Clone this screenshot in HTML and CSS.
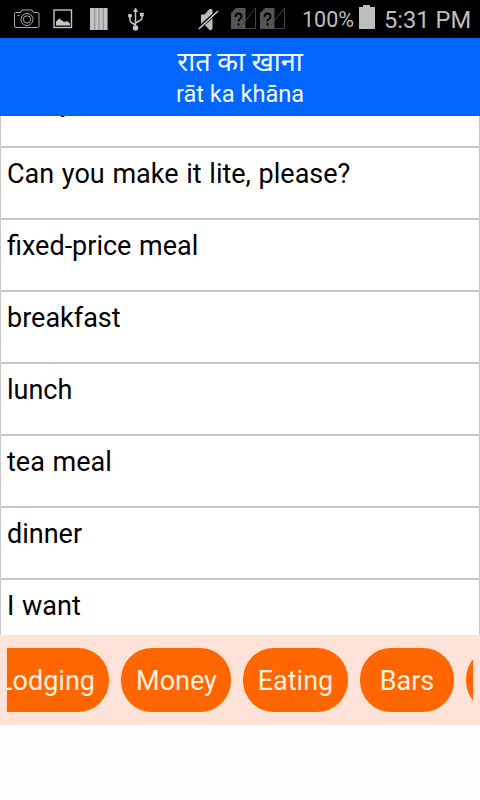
FILE: index.html
```html
<!DOCTYPE html>
<html lang="en">
<head>
<meta charset="utf-8">
<title>Phrasebook</title>
<link rel="stylesheet" href="styles.css">
</head>
<body>
<div class="status">
  <svg class="icons" width="300" height="38" viewBox="0 0 300 38" fill="none">
    <g stroke="#aaa" stroke-width="1">
      <path d="M14.500 13.500q0-1 1-1h5l1.500-2.500h10l1.500 2.500h4q1.500 0 1.500 1.500v12q0 1.500-1.500 1.500h-21.500q-1.500 0-1.500-1.500z"/>
      <circle cx="27" cy="19.500" r="6"/><circle cx="27" cy="19.500" r="3.700"/>
      <path d="M17.500 15.500h2"/>
    </g>
    <rect x="54" y="10" width="17.500" height="17.500" stroke="#c4c4c4" stroke-width="1.400"/>
    <path d="M56 25.500v-4l3.500-3 3 2.500 2.500 1 2-1 3 2.500v2z" fill="#c4c4c4"/>
    <path d="M90 8h17.600v22H90z" fill="#c4c4c4"/>
    <path d="M94.700 8v22M99 8v22M103.300 8v22" stroke="#777" stroke-width=".8"/>
    <g stroke="#c4c4c4" stroke-width="1.500">
      <path d="M135.500 28V10M130 17v3q0 2 2 3l3.500 2M142 15v3q0 1.500-2 2.500l-4.500 2.500"/>
      <circle cx="135.500" cy="28" r="2" fill="#c4c4c4"/>
      <path d="M135.500 8l2 3.500h-4z" fill="#c4c4c4" stroke-width=".7"/>
      <circle cx="130" cy="15.700" r="1.300" fill="#c4c4c4"/>
      <path d="M140.700 13.500h2.300v2h-2.300z" fill="#c4c4c4"/>
    </g>
    <path d="M201 14.500h3.500l4.500-5q2.500-2 3.500 1v18q-1 3-3.500 1l-4.500-5H201z" fill="#bbb"/>
    <path d="M198.500 28.500L218 11" stroke="#000" stroke-width="3.600"/>
    <path d="M198.800 29L218 11" stroke="#ccc" stroke-width="1.500"/>
    <g id="sim">
      <path d="M231 13l5-5h9.500v12.500L239 29h-8z" fill="#555"/>
      <path d="M239 28.500L255.500 8v20.500z" stroke="#444"/>
      <path d="M245.500 20.500V29H239z" fill="#555"/>
      <path d="M235.500 17q0-3.500 3-3.500t3 3q0 1.500-1.700 2.500-1.300.8-1.300 2.500M238.500 23.300v2.200" stroke="#000" stroke-width="2"/>
    </g>
    <use href="#sim" x="29"/>
  </svg>
  <span class="percent">100%</span>
  <svg class="battery" width="16" height="24" viewBox="0 0 16 24"><path d="M4 0h7v2h5v22H0V2h4z" fill="#bebebe"/></svg>
  <span class="clock">5:31 PM</span>
</div>
<header class="header">
  <div class="hindi" lang="hi">रात का खाना</div>
  <div class="latin">rāt ka khāna</div>
</header>
<ul class="list">
  <li>Can you</li>
  <li>Can you make it lite, please?</li>
  <li>fixed-price meal</li>
  <li>breakfast</li>
  <li>lunch</li>
  <li>tea meal</li>
  <li>dinner</li>
  <li>I want</li>
</ul>
<nav class="tabs">
  <div class="scroller">
    <button class="tab lodging">Lodging</button>
    <button class="tab money">Money</button>
    <button class="tab eating">Eating</button>
    <button class="tab bars">Bars</button>
    <button class="tab more"></button>
  </div>
</nav>
</body>
</html>
```
FILE: styles.css
```css
* { box-sizing: border-box; }
body {
  margin: 0;
  height: 800px;
  overflow: hidden;
  background: #fefefe;
  font-family: Roboto, "Noto Sans", sans-serif;
}
.status {
  display: flex;
  height: 38px;
  background: #000;
  color: #bebebe;
  white-space: nowrap;
}
.icons { flex: none; }
.percent {
  width: 59px;
  padding-left: 2px;
  font-size: 21.5px;
  line-height: 40px;
}
.battery { flex: none; margin-top: 5px; }
.clock {
  margin-left: 9px;
  font-size: 23.7px;
  line-height: 40px;
}
.header {
  height: 78px;
  padding-top: 10px;
  background: #06f;
  color: #f4f8ff;
  text-align: center;
}
.hindi { height: 30px; font-size: 27px; line-height: 29px; }
.latin { height: 30px; font-size: 23.6px; line-height: 32px; }
.list {
  display: flex;
  flex-direction: column;
  justify-content: flex-end;
  height: 519px;
  margin: 0;
  padding: 0;
  overflow: hidden;
  list-style: none;
  background: #fff;
  border: solid #c8c8c8;
  border-width: 0 1px;
}
.list li {
  flex: none;
  height: 72px;
  padding: 10px 6px 0;
  border-bottom: 2px solid #c8c8c8;
  color: #000;
  font-size: 27px;
  line-height: 32px;
  word-spacing: 1px;
}
.list li:first-child { padding-left: 4px; }
.list li:last-child { height: 55px; border: 0; }
.tabs {
  height: 90px;
  padding: 13px 7px;
  background: #ffe3d8;
}
.scroller {
  display: flex;
  gap: 12px;
  height: 64px;
  overflow: hidden;
}
.tab {
  flex: none;
  height: 64px;
  padding: 2px 0 0;
  border: 0;
  border-radius: 31px;
  background: #f60;
  color: #fff0df;
  font: 27px Roboto, sans-serif;
}
.lodging { width: 131px; margin-left: -29px; padding-left: 6px; }
.money { width: 110px; padding-left: 1px; }
.eating { width: 105px; }
.bars { width: 94px; }
.more { width: 100px; }
```
